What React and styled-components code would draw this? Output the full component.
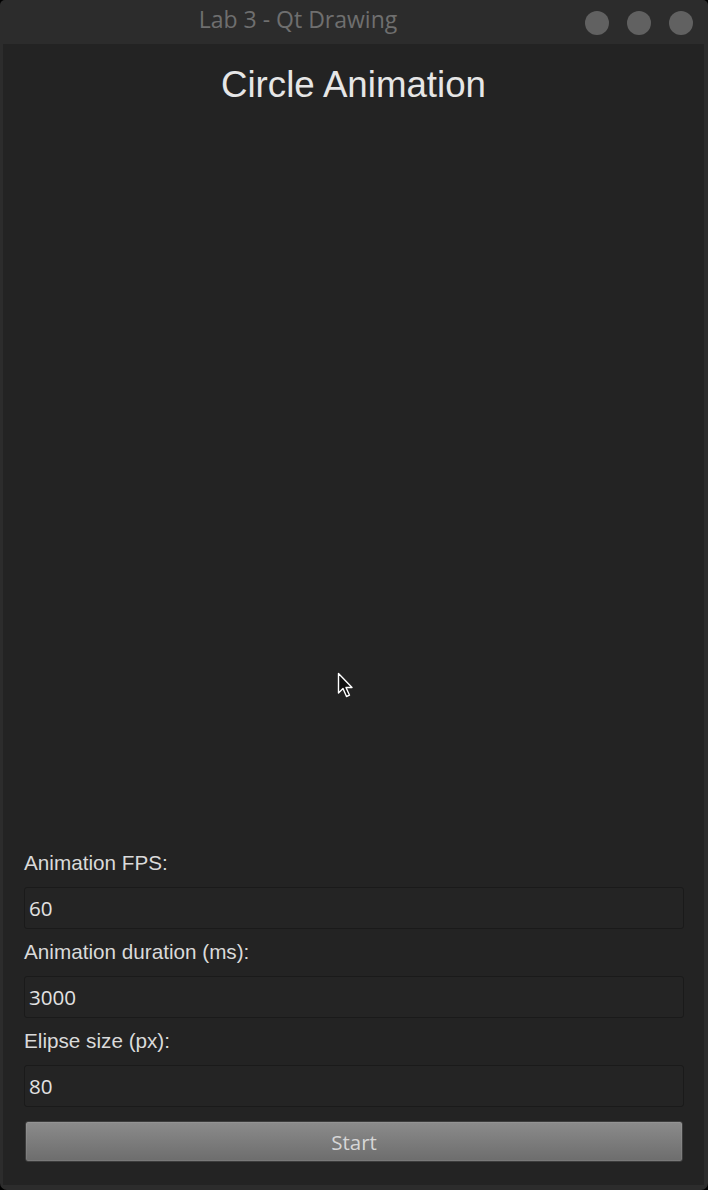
import React from "react";
import styled, { createGlobalStyle } from "styled-components";

const Global = createGlobalStyle`
  html, body { margin: 0; padding: 0; background: #000; }
  body { width: 708px; height: 1190px; overflow: hidden; }
  * { box-sizing: border-box; }
`;

const Window = styled.div`
  position: relative;
  width: 708px;
  height: 1190px;
  background: #2c2c2c;
  border-radius: 5px 5px 7px 7px;
  display: flex;
  flex-direction: column;
  overflow: hidden;
`;

const TitleBar = styled.div`
  height: 44px;
  flex: 0 0 44px;
  display: flex;
  align-items: center;
`;

const Title = styled.div`
  flex: 1;
  padding-left: 11px;
  text-align: center;
  font-family: "Open Sans", "Noto Sans", sans-serif;
  font-size: 23px;
  color: #6f6f6f;
  line-height: 1;
  margin-top: -6px;
`;

const Controls = styled.div`
  display: flex;
  gap: 18px;
  padding-right: 15px;
  margin-top: 2px;
`;

const Dot = styled.span`
  width: 24px;
  height: 24px;
  border-radius: 50%;
  background: #616161;
`;

const Content = styled.div`
  position: relative;
  flex: 1;
  margin: 0 4px 5px 3px;
  background: #232323;
  display: flex;
  flex-direction: column;
`;

const Heading = styled.h1`
  margin: 20px 0 0;
  font-family: "Liberation Sans", Arial, sans-serif;
  font-weight: 400;
  font-size: 36.7px;
  line-height: 41px;
  color: #e6e6e6;
  text-align: center;
`;

const Canvas = styled.div`
  flex: 1;
`;

const Form = styled.div`
  display: flex;
  flex-direction: column;
  gap: 12px;
  padding: 0 20px 23px 21px;
`;

const Field = styled.div`
  display: flex;
  flex-direction: column;
  gap: 11px;
`;

const Label = styled.label`
  font-family: "Liberation Sans", Arial, sans-serif;
  font-size: 20.7px;
  line-height: 24px;
  color: #dadada;
  margin-top: -1px;
  margin-bottom: 1px;
`;

const Input = styled.div`
  height: 42px;
  background: #242424;
  border: 1px solid #1a1a1a;
  border-radius: 3px;
  padding-left: 4px;
  display: flex;
  align-items: center;
  font-family: "Open Sans", "Noto Sans", sans-serif;
  font-size: 20.6px;
  color: #e2e2e2;
`;

const Button = styled.button`
  margin-top: 2px;
  margin-left: 1px;
  margin-right: 1px;
  height: 41px;
  border: 1px solid #3c3c3c;
  border-radius: 3px;
  background: linear-gradient(#8b8b8b, #6d6d6d);
  box-shadow: inset 0 0 0 1px rgba(255, 255, 255, 0.08);
  font-family: "Open Sans", "Noto Sans", sans-serif;
  font-size: 20.5px;
  color: #d6d6d6;
  padding: 0;
`;

const Cursor = styled.svg`
  position: absolute;
  left: 334px;
  top: 628px;
`;

const fields = [
  { label: "Animation FPS:", value: "60" },
  { label: "Animation duration (ms):", value: "3000" },
  { label: "Elipse size (px):", value: "80" },
];

export default function App() {
  return (
    <>
      <Global />
      <Window>
        <TitleBar>
          <Title>Lab 3 - Qt Drawing</Title>
          <Controls>
            <Dot />
            <Dot />
            <Dot />
          </Controls>
        </TitleBar>
        <Content>
          <Heading>Circle Animation</Heading>
          <Canvas />
          <Form>
            {fields.map((f) => (
              <Field key={f.label}>
                <Label>{f.label}</Label>
                <Input>{f.value}</Input>
              </Field>
            ))}
            <Button>Start</Button>
          </Form>
          <Cursor width="20" height="28" viewBox="0 0 20 28">
            <path
              d="M1.5 1.5 L1.5 21 L6 16.5 L9.5 24.5 L12.5 23.2 L9 15.5 L15 15.5 Z"
              fill="#111"
              stroke="#fff"
              strokeWidth="1.4"
              strokeLinejoin="round"
            />
          </Cursor>
        </Content>
      </Window>
    </>
  );
}
